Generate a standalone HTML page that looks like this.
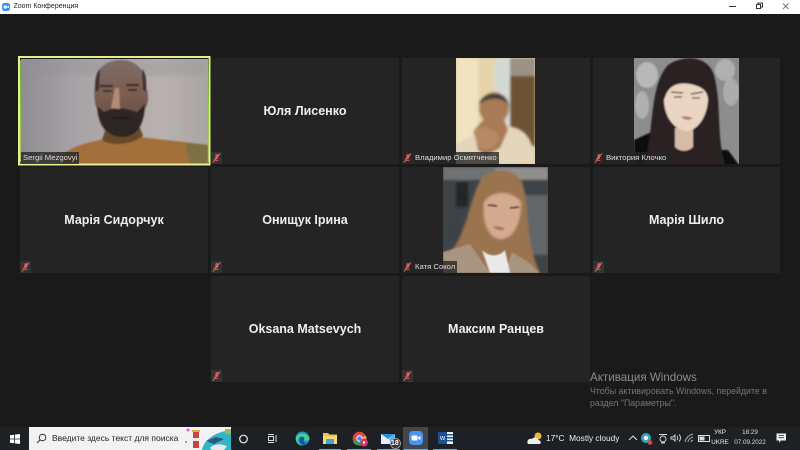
<!DOCTYPE html>
<html><head><meta charset="utf-8"><style>
html,body{margin:0;padding:0;width:800px;height:450px;overflow:hidden;background:#1a1a1a}
body{position:relative;font-family:"Liberation Sans",sans-serif}
.a{position:absolute;white-space:nowrap}
.tb{left:0;top:0;width:800px;height:14px;background:#fff}
.t{position:absolute;background:#242424;width:188px;height:106px}
.n{position:absolute;left:0;right:0;top:46px;text-align:center;color:#eee;font-weight:bold;font-size:12.5px;line-height:15px}
.m{position:absolute;left:0;bottom:0;height:12px;width:11px;background:#333}
.m svg{position:absolute;left:1px;top:1px}
.l{position:absolute;left:0;bottom:0;height:12px;background:rgba(38,38,38,.8);color:#ddd;font-size:7.7px;line-height:12px;white-space:nowrap;padding:0 2px 0 13px}
.bar{left:0;top:427px;width:800px;height:23px;background:#1d2024}
.ul{position:absolute;top:448.5px;height:1.5px;background:#6fa8d8}
</style></head><body>
<div class="a tb"></div>
<svg class="a" style="left:2px;top:3px" width="8" height="8"><rect width="8" height="8" rx="2.5" fill="#2d8cff"/><rect x="1.5" y="2.5" width="3.4" height="3" rx=".6" fill="#fff"/><path d="M5.2 3.6 7 2.6V5.4L5.2 4.4Z" fill="#fff"/></svg>
<div class="a" style="left:13.5px;top:2px;font-size:7px;line-height:10px;color:#222">Zoom Конференция</div>
<svg class="a" style="left:725px;top:0" width="70" height="14" fill="none" stroke="#333"><path d="M4 6.5H11" stroke-width="1"/><rect x="31.5" y="4.5" width="4" height="4"/><path d="M33 4V3H37.500V7H36"/><path d="M58 3.500 63.500 9M63.500 3.500 58 9" stroke="#777"/></svg>

<div class="t" style="left:211px;top:58px"><div class="n">Юля Лисенко</div><div class="m"><svg width="9" height="10"><use href="#mic"/></svg></div></div>
<div class="t" style="left:20px;top:167px"><div class="n">Марія Сидорчук</div><div class="m"><svg width="9" height="10"><use href="#mic"/></svg></div></div>
<div class="t" style="left:211px;top:167px"><div class="n">Онищук Ірина</div><div class="m"><svg width="9" height="10"><use href="#mic"/></svg></div></div>
<div class="t" style="left:593px;top:167px;width:187px"><div class="n">Марія Шило</div><div class="m"><svg width="9" height="10"><use href="#mic"/></svg></div></div>
<div class="t" style="left:211px;top:276px"><div class="n">Oksana Matsevych</div><div class="m"><svg width="9" height="10"><use href="#mic"/></svg></div></div>
<div class="t" style="left:402px;top:276px"><div class="n">Максим Ранцев</div><div class="m"><svg width="9" height="10"><use href="#mic"/></svg></div></div>
<div class="t" style="left:402px;top:58px"></div>
<div class="t" style="left:593px;top:58px;width:187px"></div>
<div class="t" style="left:402px;top:167px"></div>

<svg width="0" height="0" style="position:absolute"><defs>
<g id="mic"><path d="M5 1 C6.500 1 6.800 2.500 6.500 3.500L5.500 6C4.500 6.500 3.200 6 3 4.800L3.500 2C3.700 1.300 4.300 1 5 1Z" fill="#d9534f"/><path d="M8 .5 1 9.500" stroke="#e8706c" stroke-width="1"/><path d="M2 5.500C2.500 7.500 4.500 8 6.500 7" stroke="#d9534f" fill="none"/></g>
<filter id="b1"><feGaussianBlur stdDeviation=".8"/></filter>
<filter id="b2"><feGaussianBlur stdDeviation="1.300"/></filter>
<filter id="b4"><feGaussianBlur stdDeviation="5"/></filter>
<linearGradient id="g1" x1="0" y1="0" x2="1" y2="0"><stop offset="0" stop-color="#8f8d93"/><stop offset=".3" stop-color="#a8a3a6"/><stop offset=".75" stop-color="#b8b1af"/><stop offset="1" stop-color="#aaa6a4"/></linearGradient>
<linearGradient id="fh" x1="0" y1="0" x2="0" y2="1"><stop offset="0" stop-color="#7d6c68"/><stop offset=".45" stop-color="#7a5d50"/><stop offset="1" stop-color="#5f4438"/></linearGradient>
<linearGradient id="gb" x1="0" y1="0" x2="0" y2="1"><stop offset="0" stop-color="#6c9c3a"/><stop offset=".5" stop-color="#8ed02f"/><stop offset="1" stop-color="#b5c06a"/></linearGradient>
<clipPath id="c1"><rect x="21" y="59" width="187" height="105"/></clipPath>
<clipPath id="c2"><rect x="456" y="58" width="79" height="106"/></clipPath>
<clipPath id="c3"><rect x="634" y="58" width="105" height="106"/></clipPath>
<clipPath id="c4"><rect x="443" y="167" width="105" height="106"/></clipPath>
</defs></svg>

<!-- Photos -->
<svg class="a" style="left:0;top:0" width="800" height="450">
<!-- Sergii -->
<g clip-path="url(#c1)">
<rect x="21" y="59" width="187" height="105" fill="url(#g1)"/>
<rect x="21" y="59" width="187" height="16" fill="#8f8d93" opacity=".35" filter="url(#b4)"/>
<g filter="url(#b1)">
<path d="M56 165C60 150 80 144 104 139L140 137C165 140 195 143 208 145V165Z" fill="#a3703a"/>
<path d="M185 143 208 145V165H190Z" fill="#7d6f44"/>
<path d="M102 140C110 146 130 146 143 136L140 128H106Z" fill="#6b4a2a"/>
<path d="M95 85C95 68 107 60 121 60C136 60 146 70 146 88C149 92 149 104 145 108C142 128 132 137 121 137C106 137 98 125 97 108C94 104 94 92 95 85Z" fill="url(#fh)"/>
<path d="M95.500 92C94.500 78 97 72 100 69L99 90ZM146 92C147 78 145 72 142 69L143 90Z" fill="#3f3330"/>
<path d="M97 106C100 132 112 137 122 137C134 137 144 130 145 104L137 112C125 107 112 107 104 112Z" fill="#2e2623"/>
<path d="M100 86H113M126 85H139" stroke="#3a2c28" stroke-width="2.200"/>
<path d="M103 91H112M128 90H137" stroke="#2a2020" stroke-width="1.800"/>
<path d="M115 88 111 108 120 109 119 88Z" fill="#b08c76"/>
<path d="M112 118H130" stroke="#1a1413" stroke-width="1.500"/>
</g></g>
<rect x="19" y="57" width="190.500" height="107.500" fill="none" stroke="#e6ef8f" stroke-width="2"/>
<path d="M20.500 60V162M208.500 60V162" stroke="url(#gb)" stroke-width="1"/>

<!-- Vladimir -->
<g clip-path="url(#c2)">
<rect x="456" y="58" width="79" height="106" fill="#d8caa8"/>
<g filter="url(#b2)">
<rect x="456" y="58" width="22" height="106" fill="#f1e3c0"/>
<rect x="478" y="58" width="16" height="106" fill="#e6d5a9"/>
<rect x="494" y="58" width="16" height="80" fill="#d3dad3"/>
<rect x="510" y="58" width="25" height="22" fill="#9a9285"/>
<rect x="510" y="76" width="25" height="70" fill="#6d5333"/>
<path d="M456 145C470 135 485 130 505 126C525 128 533 138 535 164H456Z" fill="#e4d6bb"/>
<path d="M478 150 474 130 484 119H504L508 130 500 148 486 156Z" fill="#a97a57"/>
<ellipse cx="494" cy="108" rx="15" ry="16" fill="#a97a56"/>
<path d="M479 104C480 92 508 88 509 106C505 98 490 96 479 104Z" fill="#45403c"/>
<path d="M473 132C480 124 495 128 499 136 498 146 488 152 480 148Z" fill="#b78a66"/>
</g></g>

<!-- Viktoria -->
<g clip-path="url(#c3)">
<rect x="634" y="58" width="105" height="106" fill="#8d8d8d"/>
<g filter="url(#b1)">
<ellipse cx="647" cy="75" rx="11" ry="13" fill="#b8b8b8"/>
<ellipse cx="725" cy="70" rx="10" ry="11" fill="#b0b0b0"/>
<ellipse cx="731" cy="92" rx="8" ry="14" fill="#acacac"/>
<ellipse cx="642" cy="105" rx="7" ry="14" fill="#b0b0b0"/>
<path d="M634 140 660 128 700 150 728 150 739 165H634Z" fill="#111"/>
<path d="M645 164C654 125 650 85 668 65C685 54 708 56 714 75C722 105 716 135 725 164Z" fill="#2b2320"/>
<path d="M675 128H693V147C688 152 680 152 675 147Z" fill="#d6bca6"/>
<path d="M664 100C668 86 676 82 690 84C700 86 708 90 708 100C707 116 698 131 686 131C674 130 664 116 664 100Z" fill="#e9d5c1"/>
<path d="M671 92 683 93M691 94 703 92" stroke="#3b2b26" stroke-width="1.300"/>
<path d="M674 97H682M692 98H700" stroke="#473a33" stroke-width="1.300"/>
<path d="M681 117 Q685 115 693 118 Q687 122 681 117Z" fill="#b97a72"/>
</g></g>

<!-- Katya -->
<g clip-path="url(#c4)">
<rect x="443" y="167" width="105" height="106" fill="#3d4347"/>
<g filter="url(#b2)">
<rect x="443" y="167" width="105" height="13" fill="#707272"/>
<rect x="495" y="167" width="53" height="13" fill="#8f8f8d"/>
<rect x="520" y="195" width="28" height="60" fill="#62656a"/>
<rect x="445" y="215" width="18" height="30" fill="#3e4246"/>
<rect x="456" y="182" width="12" height="25" fill="#222528"/>
<path d="M452 250C466 236 470 196 482 178C496 166 514 168 522 182C530 205 524 240 540 273H452Z" fill="#9a7350"/>
<path d="M484 202C492 190 512 190 521 202C521 226 512 240 499 239C488 237 482 222 484 202Z" fill="#d4aa8e"/>
</g>
<g filter="url(#b1)">
<path d="M488 205 497 206M510 208 519 207" stroke="#4d3c34" stroke-width="1.600"/>
<path d="M493 227 Q499 225 505 229 Q499 232 493 227Z" fill="#b06e62"/>
<path d="M443 252 470 244 490 273H443ZM512 252 528 262 540 273H505Z" fill="#a89580"/>
<path d="M482 250 C490 258 500 256 505 250 L510 273 H490Z" fill="#e9e9e7"/>
</g></g>
</svg>

<div class="l" style="left:21px;top:152px;padding-left:2px">Sergii Mezgovyi</div>
<div class="a" style="left:402px;top:152px;width:11px;height:12px;background:#333"></div>
<div class="l" style="left:402px;top:152px">Владимир Осмятченко</div>
<svg class="a" style="left:403px;top:153px" width="9" height="10"><use href="#mic"/></svg>
<div class="l" style="left:593px;top:152px">Виктория Клочко</div>
<svg class="a" style="left:594px;top:153px" width="9" height="10"><use href="#mic"/></svg>
<div class="l" style="left:402px;top:261px">Катя Сокол</div>
<svg class="a" style="left:403px;top:262px" width="9" height="10"><use href="#mic"/></svg>

<!-- Activation -->
<div class="a" style="left:590px;top:371px;font-size:11.600px;line-height:14px;color:#8c8c8c">Активация Windows</div>
<div class="a" style="left:590px;top:385px;font-size:8.800px;line-height:12px;color:#757575">Чтобы активировать Windows, перейдите в<br>раздел "Параметры".</div>

<!-- Taskbar -->
<div class="a bar"></div>
<svg class="a" style="left:10px;top:434px" width="10" height="10" fill="#fff"><path d="M0 1.300 4 .7V4.600H0ZM4.800.6 10 0V4.600H4.800ZM0 5.400H4V9.300L0 8.700ZM4.800 5.400H10V10L4.800 9.400Z"/></svg>
<div class="a" style="left:29px;top:427px;width:202px;height:23px;background:#f2f2f2"></div>
<svg class="a" style="left:36px;top:433px" width="11" height="11" fill="none" stroke="#333"><circle cx="6.500" cy="4.500" r="3.300"/><path d="M4 7 1 10"/></svg>
<div class="a" style="left:52px;top:432px;font-size:8.500px;line-height:13px;color:#222">Введите здесь текст для поиска</div>
<svg class="a" style="left:184px;top:427px" width="47" height="23">
<path d="M18 23C20 12 32 5 47 3V23Z" fill="#35b4c4"/><path d="M26 21C30 16 38 17 43 19L40 23H28Z" fill="#e9e9e9"/><path d="M22 14 32 10 40 12 30 17Z" fill="#2a5a80"/>
<rect x="9" y="5" width="6" height="16" fill="#c8443c"/><rect x="9" y="11" width="6" height="3" fill="#eee"/><rect x="8" y="3" width="8" height="2" fill="#d9b24a"/>
<circle cx="4" cy="3" r="1.500" fill="#e05ad0"/><circle cx="2" cy="15" r="1" fill="#5ab050"/><rect x="41" y="2" width="6" height="5" fill="#9bbb50"/>
</svg>
<svg class="a" style="left:238px;top:434px" width="11" height="10" fill="none" stroke="#eee" stroke-width="1.200"><circle cx="5.500" cy="5" r="3.800"/></svg>
<svg class="a" style="left:267px;top:433px" width="10" height="11" fill="none" stroke="#ddd"><rect x="1.500" y="3.500" width="5" height="4"/><path d="M1 1.500H7M1 9.500H7M9 2V9"/></svg>
<!-- edge -->
<svg class="a" style="left:295px;top:431px" width="15" height="15"><circle cx="7.500" cy="7.500" r="7" fill="#1f8fc4"/><path d="M1 7C3 1 12 1 14.500 7.500 14 10 10 10 9 9 11 6 7 4 4.500 6 2 8 3 13 7.500 14.500 3 14.500 .5 11 1 7Z" fill="#4ed08a"/><path d="M5 7C7 5 10 6.500 9 9 8 11 10 13 12 12 9 16 3 13 5 7Z" fill="#0c59a4"/></svg>
<!-- folder -->
<svg class="a" style="left:323px;top:432px" width="14" height="13"><path d="M0 1H5L6.500 2.500H14V12H0Z" fill="#f2c04d"/><rect y="4" width="14" height="8" fill="#f6d877"/><rect x="3" y="7" width="8" height="5" fill="#4aa4d8"/></svg>
<!-- chrome -->
<svg class="a" style="left:352px;top:431px" width="17" height="16"><circle cx="7.500" cy="7.500" r="6.800" fill="#d94b3d"/><path d="M7.500 7.500 1 11C3 15 10 16 13 12Z" fill="#3b9c50"/><path d="M7.500 7.500 14 5C14.800 7 14.500 10 13 12Z" fill="#eec042"/><circle cx="7.500" cy="7.500" r="3.200" fill="#fff"/><circle cx="7.500" cy="7.500" r="2.300" fill="#4688e8"/><circle cx="12" cy="11.500" r="4" fill="#d6336c"/><circle cx="12" cy="11.500" r="1.200" fill="#fff"/></svg>
<!-- mail -->
<svg class="a" style="left:381px;top:431px" width="20" height="18"><rect y="3" width="14" height="10" fill="#e7eef5"/><path d="M0 3H14L7 8Z" fill="#2b8fd8"/><path d="M8 8 14 3V13H10Z" fill="#55b0ea"/><circle cx="14.500" cy="12.500" r="5" fill="#3a3a3a" stroke="#aaa" stroke-width=".8"/></svg>
<div class="a" style="left:391px;top:438.500px;font-size:7px;line-height:9px;color:#fff;font-weight:bold">18</div>
<!-- zoom -->
<div class="a" style="left:403px;top:427px;width:25px;height:23px;background:#43474b"></div>
<svg class="a" style="left:409px;top:431px" width="14" height="14"><rect width="14" height="14" rx="4" fill="#4a93f0"/><rect x="2.500" y="4.500" width="6" height="5" rx="1" fill="#fff"/><path d="M9 6.500 11.500 4.800V9.200L9 7.500Z" fill="#fff"/></svg>
<!-- word -->
<svg class="a" style="left:438px;top:431px" width="15" height="14"><rect x="4" y="1" width="11" height="12" fill="#eef2f8"/><rect x="8" y="3" width="7" height="1.500" fill="#2b5a9e"/><rect x="8" y="6" width="7" height="1.500" fill="#2b5a9e"/><rect x="8" y="9" width="7" height="1.500" fill="#2b5a9e"/><rect y="1" width="9" height="12" fill="#1d4e96"/></svg>
<div class="a" style="left:440px;top:433.500px;font-size:7px;line-height:9px;color:#fff">w</div>
<div class="ul" style="left:319px;width:22px"></div><div class="ul" style="left:347px;width:24px"></div><div class="ul" style="left:377px;width:23px"></div><div class="ul" style="left:404px;width:24px"></div><div class="ul" style="left:433px;width:24px"></div>

<!-- Tray -->
<svg class="a" style="left:527px;top:432px" width="15" height="13"><circle cx="11" cy="4" r="3.500" fill="#f2b632"/><path d="M1 12C-1 9 2 6 5 7 7 4 12 6 11 8 14 8 15 12 12 12Z" fill="#eee"/></svg>
<div class="a" style="left:546px;top:432px;font-size:8.300px;line-height:13px;color:#eee">17°C&nbsp; Mostly cloudy</div>
<svg class="a" style="left:628px;top:434px" width="10" height="8" fill="none" stroke="#ddd"><path d="M1 6 5 2 9 6"/></svg>
<svg class="a" style="left:640px;top:432px" width="13" height="13"><circle cx="6" cy="6" r="5" fill="#2ba5c9"/><circle cx="6" cy="6" r="2.200" fill="#fff"/><circle cx="10" cy="10.500" r="2.300" fill="#e0433c"/></svg>
<svg class="a" style="left:658px;top:433px" width="11" height="11" fill="none" stroke="#ddd" stroke-width=".9"><circle cx="5" cy="6" r="3"/><path d="M1 1.500H9M3 10H7"/></svg>
<svg class="a" style="left:669px;top:433px" width="13" height="10" fill="none" stroke="#ccc"><path d="M2 4H4L6 2V8L4 6H2Z"/><path d="M8 3C9 4 9 6 8 7M10 1.500C12 3.500 12 6.500 10 8.500"/></svg>
<svg class="a" style="left:684px;top:433px" width="11" height="11" fill="none" stroke="#aaa"><path d="M1 9C2 5 5 2 9 1M4 9C4 7 6 5 9 4M7 9C7 8.500 8 7.500 9 7"/></svg>
<svg class="a" style="left:698px;top:434px" width="13" height="9"><rect x=".5" y="1.500" width="11" height="6" fill="none" stroke="#ddd"/><rect x="1.500" y="2.500" width="5" height="4" fill="#ddd"/></svg>
<div class="a" style="left:707px;top:428px;width:26px;text-align:center;font-size:6.300px;line-height:10px;color:#eee">УКР<br>UKRE</div>
<div class="a" style="left:733px;top:428px;width:34px;text-align:center;font-size:6.300px;line-height:10px;color:#ddd">18:29<br>07.09.2022</div>
<svg class="a" style="left:776px;top:433px" width="11" height="11"><path d="M.5 .5H10V7.500H5L3 9.800V7.500H.5Z" fill="#f0f0f0"/><path d="M2.500 2.500H8M2.500 4.700H8" stroke="#333" stroke-width=".8"/></svg>
</body></html>
